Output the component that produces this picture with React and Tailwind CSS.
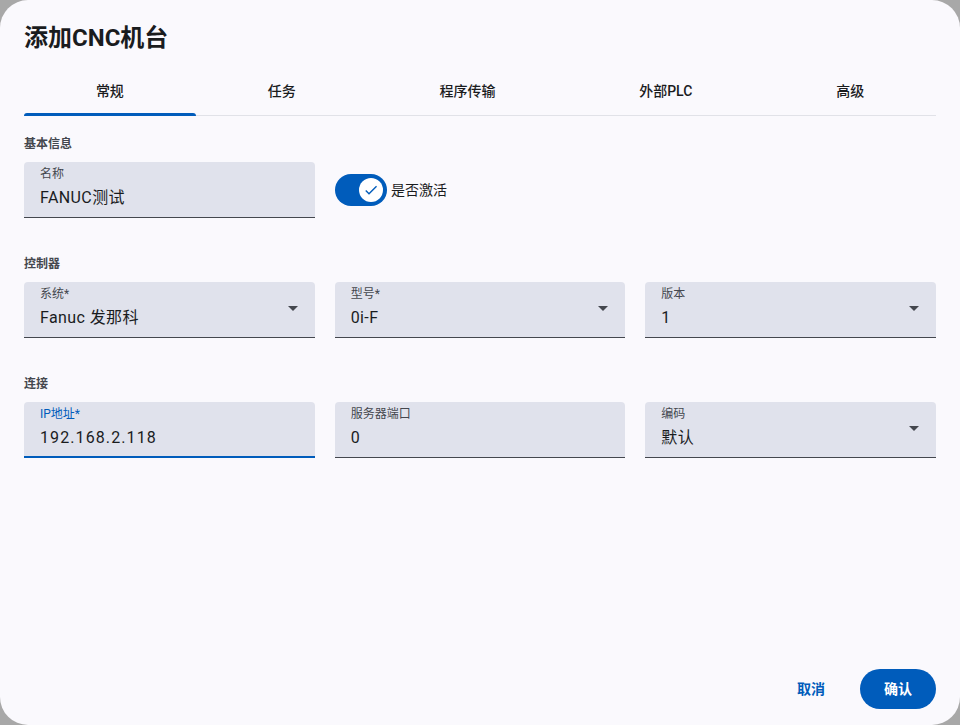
import React, { useState } from 'react';

const font = { fontFamily: 'Roboto, "Noto Sans CJK SC", sans-serif' };

const ArrowDown = () => (
  <svg width="10" height="5" viewBox="0 0 10 5" className="shrink-0">
    <path d="M0 0h10L5 5z" fill="#44474e" />
  </svg>
);

const Field = ({ label, value, select, focused, wide }) => (
  <div
    className={`flex-1 flex items-start h-14 rounded-t bg-[#e0e2ec] pl-4 pr-[17px] ${
      focused ? 'border-b-2 border-[#005cbb]' : 'border-b border-[#44474e]'
    }`}
  >
    <div className="flex-1 pt-1">
      <div className={`text-[12px] leading-4 ${focused ? 'text-[#005cbb]' : 'text-[#44474e]'}`}>{label}</div>
      <div
        className={`mt-1 text-[16px] leading-6 text-[#1a1c1e] ${wide ? 'tracking-[1.1px]' : 'tracking-[0.4px]'}`}
      >
        {value}
      </div>
    </div>
    {select && (
      <div className="self-center mb-[2px]">
        <ArrowDown />
      </div>
    )}
  </div>
);

const Section = ({ title, first, children }) => (
  <div className={first ? 'mt-5' : 'mt-[38px]'}>
    <div className="text-[12px] leading-4 font-bold text-[#44474e] mb-[10px]">{title}</div>
    <div className="flex gap-5">{children}</div>
  </div>
);

export default function App() {
  const [tab, setTab] = useState(0);
  const [active, setActive] = useState(true);
  const tabs = ['常规', '任务', '程序传输', '外部PLC', '高级'];

  return (
    <div className="w-[960px] h-[725px] bg-[#a8a8a8]" style={font}>
      <div className="h-full flex flex-col rounded-[28px] bg-[#faf9fd] px-6">
        <h1 className="pt-[22px] text-[24px] leading-8 font-bold text-[#1a1c1e]">添加CNC机台</h1>

        <div className="mt-[13px] flex border-b border-[#e1e2e8]">
          {tabs.map((t, i) => (
            <button
              key={t}
              onClick={() => setTab(i)}
              className="relative flex-auto h-12 px-4 text-[14px] font-medium text-[#1a1c1e]"
            >
              {t}
              {tab === i && (
                <span className="absolute left-0 right-0 bottom-[-1px] h-[3px] rounded-t-[3px] bg-[#005cbb]" />
              )}
            </button>
          ))}
        </div>

        <Section title="基本信息" first>
          <div className="w-[291px] shrink-0 flex">
            <Field label="名称" value="FANUC测试" />
          </div>
          <div className="flex items-center gap-1">
            <button
              onClick={() => setActive(!active)}
              className={`w-[52px] h-8 rounded-full flex items-center px-1 ${
                active ? 'bg-[#005cbb] justify-end' : 'bg-[#e0e2ec] border-2 border-[#74777f] justify-start'
              }`}
            >
              <span className="w-6 h-6 rounded-full bg-white flex items-center justify-center">
                {active && (
                  <svg width="16" height="16" viewBox="0 0 24 24">
                    <path d="M9 16.17 4.83 12l-1.42 1.41L9 19 21 7l-1.41-1.41z" fill="#005cbb" />
                  </svg>
                )}
              </span>
            </button>
            <span className="text-[14px] text-[#1a1c1e]">是否激活</span>
          </div>
        </Section>

        <Section title="控制器">
          <Field label="系统*" value="Fanuc 发那科" select />
          <Field label="型号*" value="0i-F" select />
          <Field label="版本" value="1" select />
        </Section>

        <Section title="连接">
          <Field label="IP地址*" value="192.168.2.118" focused wide />
          <Field label="服务器端口" value="0" />
          <Field label="编码" value="默认" select />
        </Section>

        <div className="flex-1" />

        <div className="flex justify-end items-center gap-[19px] pb-4">
          <button className="h-10 px-4 rounded-full text-[14px] font-bold text-[#005cbb]">取消</button>
          <button className="h-10 w-[76px] rounded-full bg-[#005cbb] text-[14px] font-bold text-white">确认</button>
        </div>
      </div>
    </div>
  );
}
